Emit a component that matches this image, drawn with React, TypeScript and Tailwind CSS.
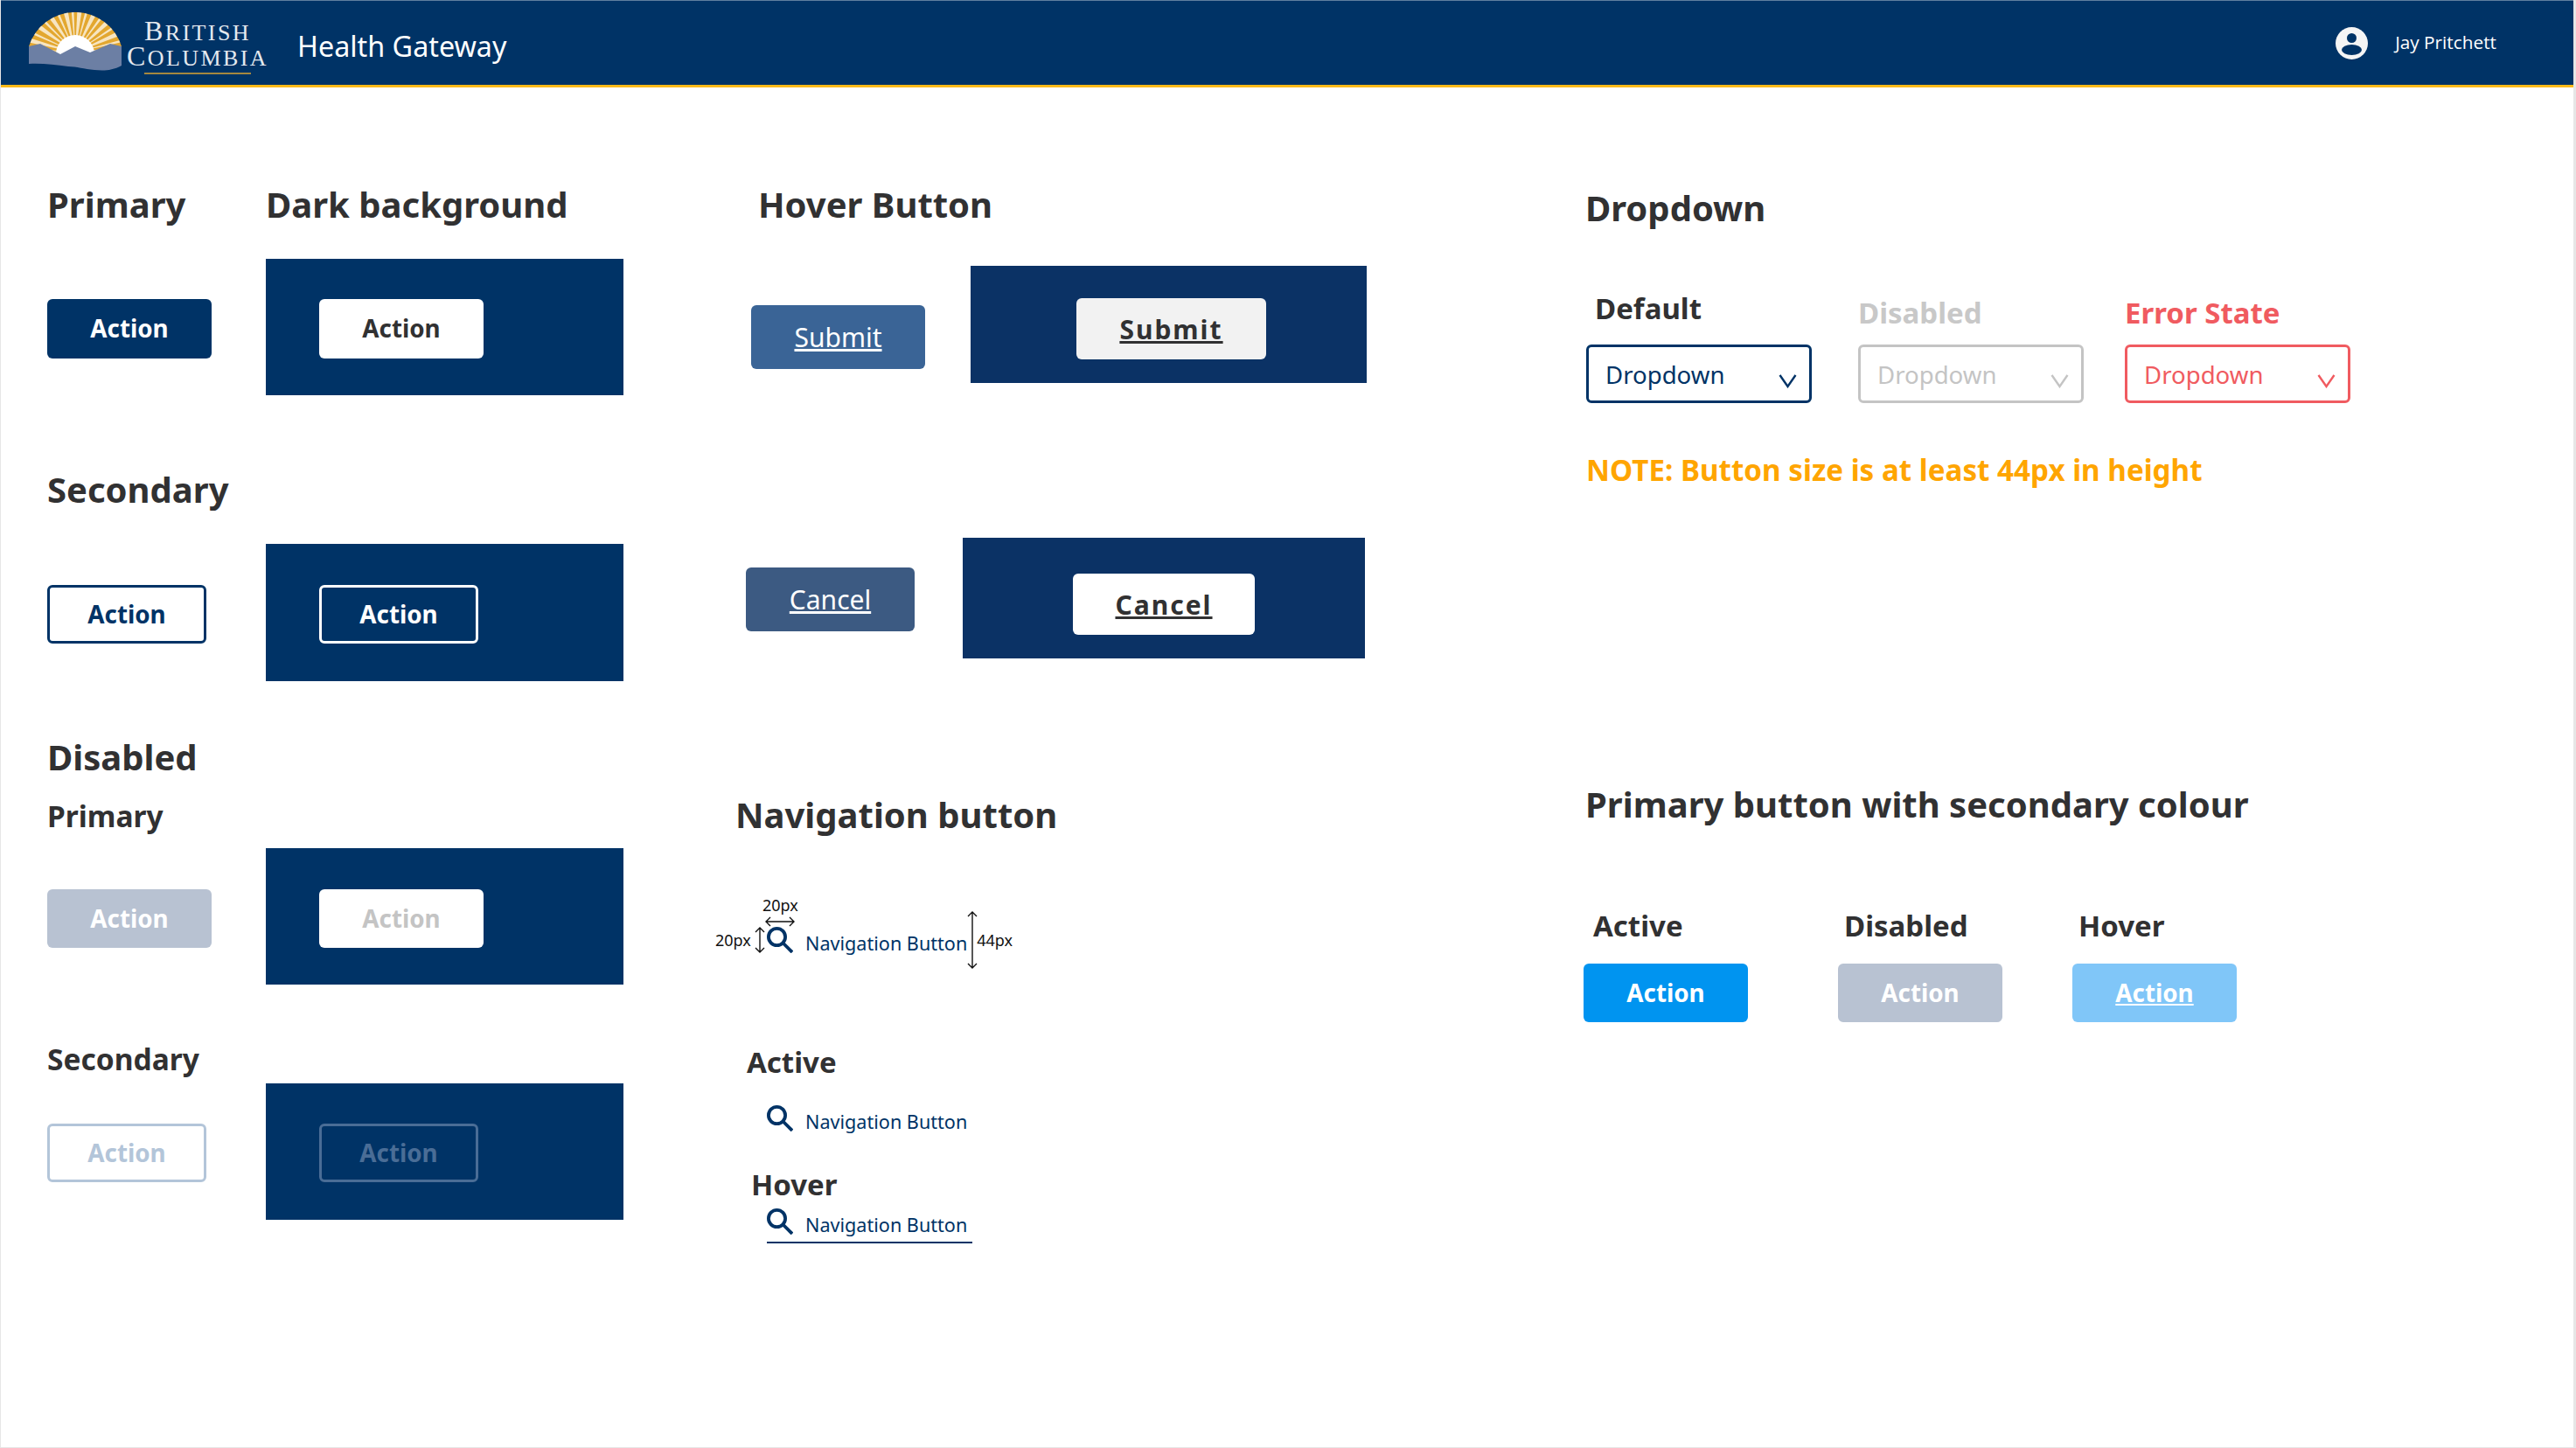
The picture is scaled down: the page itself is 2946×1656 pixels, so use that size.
const navy = "#003366";

function Action({ className, label = "Action" }: { className: string; label?: string }) {
  return (
    <div className={`flex items-center justify-center rounded-[6px] text-[27.8px] font-bold ${className}`}>
      {label}
    </div>
  );
}

function Logo() {
  const rays = [-76, -66, -57, -47, -38, -29, -20, -11, -3, 5, 13, 22, 31, 40, 49, 58, 67, 76];
  const point = (deg: number) => {
    const r = (deg * Math.PI) / 180;
    return `${54 + 58 * Math.sin(r)} ${55.5 - 58 * Math.cos(r)}`;
  };
  return (
    <svg width="108" height="70" viewBox="0 0 108 70" className="shrink-0">
      <defs>
        <clipPath id="dome">
          <path d="M1 39 A55.5 55.5 0 0 1 107 39 L107 50 L1 50 Z" />
        </clipPath>
      </defs>
      <g clipPath="url(#dome)">
        <rect width="108" height="50" fill="#e3a72f" />
        {rays.map((a, i) => (
          <path
            key={a}
            d={`M54 46 L${point(a - (i % 2 ? 2.6 : 1.4))} L${point(a + (i % 2 ? 2.6 : 1.4))} Z`}
            fill="#fff"
            opacity="0.7"
          />
        ))}
        <circle cx="54" cy="48" r="22" fill="#fff" />
      </g>
      <path
        d="M1 39 L14 36 L37 48 L54 39 L71 46 L94 36 L107 39 L107 61 C96 67 86 67 76 66 C64 65 56 62 46 62 C30 60 15 58 1 59 Z"
        fill="#6c7fa4"
      />
    </svg>
  );
}

function Search() {
  return (
    <svg width="30" height="30" viewBox="0 0 30 30" fill="none" stroke={navy} strokeWidth="3.8" className="shrink-0">
      <circle cx="11.5" cy="11.5" r="9.6" />
      <path d="M18.5 18.5 L29 29" />
    </svg>
  );
}

function NavButton() {
  return (
    <div className="flex h-[30px] gap-[14px]">
      <Search />
      <span className="pt-[4px] text-[21.6px] leading-[30px] text-[#003366]">Navigation Button</span>
    </div>
  );
}

function VArrow({ h }: { h: number }) {
  return (
    <svg width="12" height={h} viewBox={`0 0 12 ${h}`} fill="none" stroke="#111" strokeWidth="1.4" className="shrink-0">
      <path d={`M6 1 V${h - 1} M1 6 L6 1 L11 6 M1 ${h - 6} L6 ${h - 1} L11 ${h - 6}`} />
    </svg>
  );
}

function Dropdown({ className }: { className: string }) {
  return (
    <div className={`flex h-[67px] w-[258px] items-start justify-between rounded-[6px] border-[3px] pl-[19px] pr-[14px] ${className}`}>
      <span className="pt-[13px] text-[27.6px] leading-[36px]">Dropdown</span>
      <svg width="21" height="16" viewBox="0 0 21 16" fill="none" stroke="currentColor" strokeWidth="2.4" className="mt-[31px]">
        <path d="M1.5 1 L10.5 14 L19.5 1" />
      </svg>
    </div>
  );
}

export default function App() {
  return (
    <div className="h-[1656px] w-[2946px] overflow-hidden border-b border-l border-r-[3px] border-[#e6e6e6] bg-white font-['Noto_Sans',sans-serif] text-[#313132]">
      <header className="flex h-[100px] w-full items-center border-t border-b-[3px] border-t-[#5f7f9f] border-b-[#fcba19] bg-[#003366] text-white">
        <div className="ml-[31px]">
          <Logo />
        </div>
        <div className="ml-[7px] mt-[9px] flex w-[158px] flex-col items-center font-['Liberation_Serif',serif] text-[26px] uppercase tracking-[2.4px] text-[#e4e9ef]">
          <span className="leading-[26px]">
            <span className="text-[32px]">B</span>ritish
          </span>
          <span className="leading-[26px]">
            <span className="text-[32px]">C</span>olumbia
          </span>
          <span className="mt-[3px] h-[2px] w-[122px] bg-[#a5873f]" />
        </div>
        <span className="ml-[35px] pt-[6px] text-[32.3px]">Health Gateway</span>
        <div className="ml-auto mr-[88px] flex items-center gap-[31px]">
          <svg width="37" height="37" viewBox="0 0 37 37">
            <circle cx="18.5" cy="18.5" r="18.5" fill="#f5f5f5" />
            <circle cx="18.5" cy="12.5" r="5.5" fill="#003366" />
            <ellipse cx="18.5" cy="26" rx="11.5" ry="6" fill="#003366" />
          </svg>
          <span className="font-['Open_Sans',sans-serif] text-[20.8px]">Jay Pritchett</span>
        </div>
      </header>

      <main className="flex">
        {/* buttons */}
        <section className="w-[817px] shrink-0 pl-[53px]">
          <div className="mt-[114px] flex text-[40px] font-bold leading-[40px]">
            <h2 className="w-[250px]">Primary</h2>
            <h2>Dark background</h2>
          </div>
          <div className="mt-[42px] flex items-start">
            <Action className="mt-[46px] h-[68px] w-[188px] bg-[#003366] text-white" />
            <div className="ml-[62px] h-[156px] w-[409px] bg-[#003366] pl-[61px] pt-[46px]">
              <Action className="h-[68px] w-[188px] bg-white text-[#313132]" />
            </div>
          </div>

          <h2 className="mt-[88px] text-[40px] font-bold leading-[40px]">Secondary</h2>
          <div className="mt-[42px] flex items-start">
            <Action className="mt-[47px] h-[67px] w-[182px] border-[3px] border-[#003366] bg-white text-[#003366]" />
            <div className="ml-[68px] h-[157px] w-[409px] bg-[#003366] pl-[61px] pt-[47px]">
              <Action className="h-[67px] w-[182px] border-[3px] border-white text-white" />
            </div>
          </div>

          <h2 className="mt-[67px] text-[40px] font-bold leading-[40px]">Disabled</h2>
          <h3 className="mt-[30px] text-[33.5px] font-bold leading-[34px]">Primary</h3>
          <div className="mt-[20px] flex items-start">
            <Action className="mt-[47px] h-[67px] w-[188px] bg-[#b8c2d2] text-white" />
            <div className="ml-[62px] h-[156px] w-[409px] bg-[#003366] pl-[61px] pt-[47px]">
              <Action className="h-[67px] w-[188px] bg-white text-[#c4c4c4]" />
            </div>
          </div>

          <h3 className="mt-[68px] text-[33.5px] font-bold leading-[34px]">Secondary</h3>
          <div className="mt-[11px] flex items-start">
            <Action className="mt-[46px] h-[67px] w-[182px] border-[3px] border-[#b3c5d9] bg-white text-[#b3c5d9]" />
            <div className="ml-[68px] h-[156px] w-[409px] bg-[#003366] pl-[61px] pt-[46px]">
              <Action className="h-[67px] w-[182px] border-[3px] border-[#4a6d96] text-[#4a6d96]" />
            </div>
          </div>
        </section>

        {/* hover + navigation */}
        <section className="w-[993px] shrink-0">
          <h2 className="ml-[49px] mt-[114px] text-[40px] font-bold leading-[40px]">Hover Button</h2>
          <div className="mt-[50px] flex items-start">
            <div className="ml-[41px] mt-[45px] flex h-[73px] w-[199px] items-center justify-center rounded-[6px] bg-[#3a6496] text-[30px] text-white underline">
              Submit
            </div>
            <div className="ml-[52px] flex h-[134px] w-[453px] items-start bg-[#0b3265] pl-[121px] pt-[37px]">
              <Action
                label="Submit"
                className="h-[70px] w-[217px] bg-[#f2f2f2] !text-[30px] tracking-[2px] text-[#313132] underline"
              />
            </div>
          </div>
          <div className="mt-[177px] flex items-start">
            <div className="ml-[35px] mt-[34px] flex h-[73px] w-[193px] items-center justify-center rounded-[6px] bg-[#3c5a82] text-[30px] text-white underline">
              Cancel
            </div>
            <div className="ml-[55px] flex h-[138px] w-[460px] items-start bg-[#0b3265] pl-[126px] pt-[41px]">
              <Action
                label="Cancel"
                className="h-[70px] w-[208px] bg-white !text-[30px] tracking-[2px] text-[#313132] underline"
              />
            </div>
          </div>

          <h2 className="ml-[23px] mt-[159px] text-[40px] font-bold leading-[40px]">Navigation button</h2>
          <div className="mt-[90px] flex h-[66px] items-center text-[18px] text-[#111]">
            <span className="w-[45px]">20px</span>
            <VArrow h={30} />
            <div className="relative ml-[2px]">
              <NavButton />
              <span className="absolute left-[-5px] top-[-37px] leading-[24px]">20px</span>
              <svg width="34" height="12" viewBox="0 0 34 12" fill="none" stroke="#111" strokeWidth="1.4" className="absolute left-[-2px] top-[-12px]">
                <path d="M1 6 H33 M6 1 L1 6 L6 11 M28 1 L33 6 L28 11" />
              </svg>
            </div>
            <VArrow h={66} />
            <span className="ml-[-1px]">44px</span>
          </div>

          <h3 className="ml-[36px] mt-[90px] text-[33px] font-bold leading-[33px]">Active</h3>
          <div className="ml-[59px] mt-[33px]">
            <NavButton />
          </div>
          <h3 className="ml-[41px] mt-[44px] text-[33px] font-bold leading-[33px]">Hover</h3>
          <div className="ml-[59px] mt-[11px] w-[235px] border-b-2 border-[#003366] pb-[8px]">
            <NavButton />
          </div>
        </section>

        {/* dropdown + secondary colour */}
        <section className="flex-1">
          <h2 className="ml-[2px] mt-[118px] text-[40px] font-bold leading-[40px]">Dropdown</h2>
          <div className="ml-[3px] mt-[78px] flex items-end">
            <div className="w-[311px]">
              <p className="mb-[25px] ml-[10px] text-[33px] font-bold leading-[33px]">Default</p>
              <Dropdown className="border-[#003366] text-[#003366]" />
            </div>
            <div className="w-[305px]">
              <p className="mb-[20px] text-[33px] font-bold leading-[33px] text-[#c8c8c8]">Disabled</p>
              <Dropdown className="border-[#c4c4c4] text-[#c4c4c4]" />
            </div>
            <div>
              <p className="mb-[20px] text-[33px] font-bold leading-[33px] text-[#f05b60]">Error State</p>
              <Dropdown className="border-[#f05b60] text-[#f05b60]" />
            </div>
          </div>
          <p className="ml-[3px] mt-[60px] text-[33.2px] font-bold leading-[33px] text-[#ffa500]">
            NOTE: Button size is at least 44px in height
          </p>

          <h2 className="ml-[2px] mt-[346px] text-[40px] font-bold leading-[40px]">
            Primary button with secondary colour
          </h2>
          <div className="mt-[102px] flex">
            <div className="w-[188px]">
              <p className="ml-[11px] text-[33px] font-bold leading-[33px]">Active</p>
              <Action className="mt-[27px] h-[67px] w-[188px] bg-[#0094f0] text-white" />
            </div>
            <div className="ml-[103px] w-[188px]">
              <p className="ml-[7px] text-[33px] font-bold leading-[33px]">Disabled</p>
              <Action className="mt-[27px] h-[67px] w-[188px] bg-[#b8c2d2] text-white" />
            </div>
            <div className="ml-[80px] w-[188px]">
              <p className="ml-[7px] text-[33px] font-bold leading-[33px]">Hover</p>
              <Action className="mt-[27px] h-[67px] w-[188px] bg-[#80c6f8] text-white underline" />
            </div>
          </div>
        </section>
      </main>
    </div>
  );
}
